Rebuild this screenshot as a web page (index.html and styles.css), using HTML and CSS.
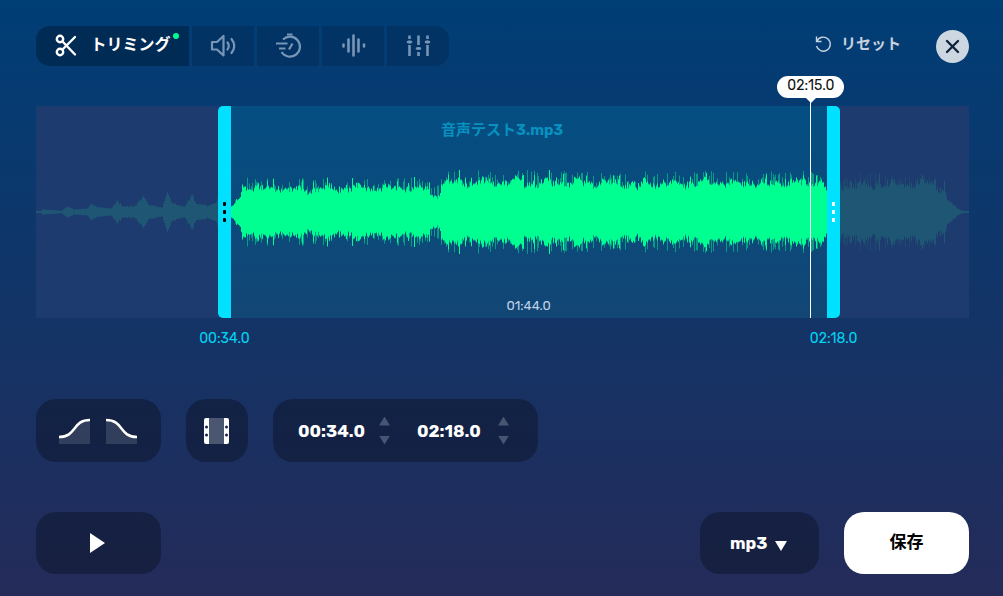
FILE: index.html
```html
<!DOCTYPE html>
<html lang="ja">
<head>
    <meta charset="UTF-8">
    <meta name="viewport" content="width=device-width, initial-scale=1.0">
    <title>音声カッター</title>
    <link rel="stylesheet" href="styles.css">
</head>
<body>

<main class="editor">
    <header class="topbar">
        <nav class="tabs">
            <button class="tab tab-active" type="button">
                <svg width="24" height="24" viewBox="0 0 24 24" fill="none" stroke="currentColor" stroke-width="2.4" stroke-linecap="round">
                    <circle cx="6" cy="5" r="3.200"/>
                    <circle cx="6" cy="18" r="3.200"/>
                    <path d="M8.500 7.500L21 20.500M8.500 15.500L21 3"/>
                </svg>
                <span class="tab-text">トリミング</span>
                <span class="tab-dot"></span>
            </button>
            <button class="tab" type="button" aria-label="音量">
                <svg width="28" height="26" viewBox="0 0 28 26" fill="none" stroke="currentColor" stroke-width="2.2" stroke-linejoin="round" stroke-linecap="round">
                    <path d="M3 9H8L14.500 3V22.500L8 16.500H3Z"/>
                    <path d="M18.500 9.500Q21 12.800 18.500 16.500M22.500 6Q28 12.800 22.500 20"/>
                </svg>
            </button>
            <button class="tab" type="button" aria-label="速度">
                <svg width="28" height="28" viewBox="0 0 28 28" fill="none" stroke="currentColor" stroke-width="2.2">
                    <path d="M9 7.500A10 10 0 1 1 7.500 20"/>
                    <path d="M13 2.500H18.500M2 11.500H13.500M5 16.500H11.500M15 17.500L18.500 11.500"/>
                </svg>
            </button>
            <button class="tab" type="button" aria-label="ピッチ">
                <svg width="26" height="26" viewBox="0 0 26 26" fill="none" stroke="currentColor" stroke-width="2.6" stroke-linecap="round">
                    <path d="M3.500 11.500V13.500M8.500 6.500V18.500M13.500 2.500V22.500M18.500 6.500V18.500M24 11.500V13.500"/>
                </svg>
            </button>
            <button class="tab" type="button" aria-label="イコライザー">
                <svg width="26" height="26" viewBox="0 0 26 26" fill="none" stroke="currentColor" stroke-width="2.6">
                    <path d="M4.500 2.500V6M4.500 12V23M13.500 2.500V12M13.500 19V23M22.500 2.500V6M22.500 12V23"/>
                    <path d="M3 9H6M12 15.500H15M21 9H24" stroke-linecap="round"/>
                    <path d="M4.500 7.500V10.500M13.500 14V17M22.500 7.500V10.500" stroke-width="2"/>
                </svg>
            </button>
        </nav>
        <button class="reset" type="button">
            <svg width="18" height="18" viewBox="0 0 18 18" fill="none" stroke="currentColor" stroke-width="1.4">
                <path d="M2.500 1.500V6.500H7.500M3 6A7 7 0 1 1 2.500 11"/>
            </svg>
            リセット
        </button>
        <button class="close" type="button" aria-label="閉じる">
            <svg width="15" height="15" viewBox="0 0 15 15" fill="none" stroke="currentColor" stroke-width="2.4" stroke-linecap="round">
                <path d="M2 2L13 13M13 2L2 13"/>
            </svg>
        </button>
    </header>

    <section class="timeline">
        <div class="selection"></div>
        <svg class="wave" viewBox="0 0 933 212" preserveAspectRatio="none">
            <path class="wave-soft" id="wave-soft"/>
            <path class="wave-dim" id="wave-dim"/>
            <path class="wave-peaks" id="wave-peaks"/>
            <path class="wave-on" id="wave-on"/>
        </svg>
        <div class="track-info">
            <span class="track-name">音声テスト3.mp3</span>
            <span class="track-length">01:44.0</span>
        </div>
        <div class="handle handle-start"><i></i><i></i><i></i><span class="handle-time">00:34.0</span></div>
        <div class="playhead"><span class="playhead-time">02:15.0</span></div>
        <div class="handle handle-end"><i></i><i></i><i></i><span class="handle-time">02:18.0</span></div>
    </section>

    <section class="tools">
        <div class="panel fades">
            <button class="icon-button" type="button" aria-label="フェードイン">
                <svg width="31" height="26" viewBox="0 0 31 26" fill="none">
                    <path d="M0 19C18 19 13 2 31 2V26H0Z" fill="#fff" fill-opacity=".13"/>
                    <path d="M0 19C18 19 13 2 31 2" stroke="#fff" stroke-width="2.500"/>
                </svg>
            </button>
            <button class="icon-button" type="button" aria-label="フェードアウト">
                <svg width="31" height="26" viewBox="0 0 31 26" fill="none">
                    <path d="M0 2C18 2 13 19 31 19V26H0Z" fill="#fff" fill-opacity=".13"/>
                    <path d="M0 2C18 2 13 19 31 19" stroke="#fff" stroke-width="2.500"/>
                </svg>
            </button>
        </div>
        <button class="panel clip" type="button" aria-label="選択範囲">
            <svg width="26" height="26" viewBox="0 0 26 26">
                <path d="M5 0H20V26H5Z" fill="#fff" fill-opacity=".24"/>
                <path d="M5 0H2Q0 0 0 2V24Q0 26 2 26H5ZM20 0H23Q25 0 25 2V24Q25 26 23 26H20Z" fill="#fff"/>
                <g fill="#132347">
                    <circle cx="2.500" cy="9" r="1.500"/>
                    <circle cx="2.500" cy="17" r="1.500"/>
                    <circle cx="22.500" cy="9" r="1.500"/>
                    <circle cx="22.500" cy="17" r="1.500"/>
                </g>
            </svg>
        </button>
        <div class="panel times">
            <div class="time-field">
                <input class="time-input" type="text" value="00:34.0" aria-label="開始時間">
                <div class="stepper">
                    <button class="step step-up" type="button" aria-label="開始を進める"></button>
                    <button class="step step-down" type="button" aria-label="開始を戻す"></button>
                </div>
            </div>
            <div class="time-field">
                <input class="time-input" type="text" value="02:18.0" aria-label="終了時間">
                <div class="stepper">
                    <button class="step step-up" type="button" aria-label="終了を進める"></button>
                    <button class="step step-down" type="button" aria-label="終了を戻す"></button>
                </div>
            </div>
        </div>
    </section>

    <footer class="bottombar">
        <button class="panel play" type="button" aria-label="再生">
            <svg width="16" height="20" viewBox="0 0 16 20"><path d="M0 0L15 10L0 20Z" fill="#fff"/></svg>
        </button>
        <div class="panel format">
            <select class="format-select" aria-label="形式">
                <option>mp3</option>
                <option>m4a</option>
                <option>wav</option>
            </select>
            <svg class="format-arrow" width="12" height="10" viewBox="0 0 12 10"><path d="M0 0H12L6 10Z" fill="#fff"/></svg>
        </div>
        <button class="panel save" type="button">保存</button>
    </footer>
</main>

<script src="script.js"></script>
</body>
</html>
```
FILE: styles.css
```css
* {
    margin: 0;
    padding: 0;
    box-sizing: border-box;
}

body {
    min-height: 100vh;
    font-family: Rubik, Inter, 'Noto Sans CJK JP', sans-serif;
    background: linear-gradient(#003e76, #242b59);
    color: #fff;
}

button, input, select {
    font: inherit;
    color: inherit;
    border: none;
    background: none;
}

button {
    display: flex;
    align-items: center;
    justify-content: center;
    cursor: pointer;
}

.editor {
    padding: 26px 34px 22px 36px;
}

.topbar {
    display: flex;
    align-items: center;
    height: 40px;
    margin-bottom: 40px;
}

.tabs {
    display: flex;
    gap: 3px;
    height: 40px;
    margin-right: auto;
    border-radius: 14px;
    overflow: hidden;
}

.tab {
    width: 62px;
    background: rgba(0, 15, 40, 0.2);
    color: #7795b5;
}

.tab-active {
    position: relative;
    width: 153px;
    gap: 12px;
    background: #002b55;
    color: #fff;
}

.tab-text {
    padding-bottom: 2px;
    font-size: 16px;
    font-weight: 700;
    line-height: 24px;
}

.tab-dot {
    position: absolute;
    top: 7px;
    right: 10px;
    width: 6px;
    height: 6px;
    border-radius: 50%;
    background: #00ff91;
}

.reset {
    gap: 9px;
    padding-bottom: 4px;
    margin-right: 35px;
    font-size: 15px;
    font-weight: 700;
    line-height: 24px;
    color: #c5d2df;
}

.close {
    width: 33px;
    height: 33px;
    border-radius: 50%;
    background: #ccd7e2;
    color: #12233c;
}

.timeline {
    position: relative;
    height: 212px;
    margin-bottom: 81px;
    background: #1e3b70;
}

.selection {
    position: absolute;
    top: 0;
    bottom: 0;
    left: 20.8%;
    right: 15.2%;
    background: linear-gradient(#044e82, #124675);
}

.wave {
    position: absolute;
    width: 100%;
    height: 100%;
}

.wave path {
    fill: none;
    stroke-width: 1;
}

.wave .wave-soft {
    stroke: #1e496f;
}

.wave .wave-dim {
    stroke: #1e5673;
}

.wave .wave-peaks {
    stroke: #059e85;
}

.wave .wave-on {
    stroke: #00ff91;
}

.track-info {
    position: absolute;
    top: 0;
    bottom: 0;
    left: 20.8%;
    right: 15.2%;
    display: flex;
    flex-direction: column;
    align-items: center;
    justify-content: space-between;
    padding: 14px 0 2px;
    line-height: 20px;
}

.track-name {
    padding-right: 53px;
    font-size: 15px;
    font-weight: 700;
    color: #0891bf;
}

.track-length {
    font-size: 13px;
    color: #bed1e7;
}

.handle {
    position: absolute;
    top: 0;
    bottom: 0;
    width: 13px;
    display: flex;
    flex-direction: column;
    align-items: center;
    justify-content: center;
    gap: 4px;
    background: #00e1ff;
}

.handle i {
    width: 3px;
    height: 4px;
    border-radius: 1px;
    background: #000;
}

.handle-start {
    left: 19.5%;
    border-radius: 5px 0 0 5px;
}

.handle-end {
    left: 84.8%;
    border-radius: 0 5px 5px 0;
}

.handle-end i {
    background: #fff;
}

.handle-time {
    position: absolute;
    top: 100%;
    padding-top: 11px;
    font-size: 14px;
    line-height: 20px;
    color: #00d5f3;
}

.playhead {
    position: absolute;
    top: -8px;
    bottom: 0;
    left: 83%;
    width: 1px;
    display: flex;
    justify-content: center;
    background: #fff;
}

.playhead-time {
    position: absolute;
    bottom: 100%;
    padding: 0 10px 2px;
    border-radius: 11px;
    font-size: 14px;
    line-height: 20px;
    background: #fff;
    color: #111;
}

.playhead-time::after {
    content: "";
    position: absolute;
    top: 100%;
    left: 50%;
    margin-left: -5px;
    border: 5px solid transparent;
    border-top-color: #fff;
}

.tools, .bottombar {
    display: flex;
    gap: 25px;
}

.tools {
    margin-bottom: 50px;
}

.panel {
    display: flex;
    align-items: center;
    justify-content: center;
    height: 62px;
    border-radius: 20px;
    background: rgba(11, 20, 40, 0.5);
}

.tools .panel {
    height: 63px;
}

.fades {
    width: 125px;
    gap: 16px;
    padding-right: 2px;
}

.clip {
    width: 62px;
}

.times {
    gap: 27px;
    padding: 0 29px 0 25px;
}

.time-field {
    display: flex;
    align-items: center;
    gap: 12px;
}

.time-input {
    width: 69px;
    font-size: 17px;
    font-weight: 700;
}

.stepper {
    display: flex;
    flex-direction: column;
    gap: 10px;
}

.step {
    width: 11px;
    height: 9px;
    background: #465571;
}

.step-up {
    clip-path: polygon(50% 0, 100% 100%, 0 100%);
}

.step-down {
    clip-path: polygon(0 0, 100% 0, 50% 100%);
}

.play {
    width: 125px;
    padding-right: 2px;
    margin-right: auto;
}

.format {
    position: relative;
    width: 119px;
}

.format-select {
    width: 100%;
    height: 100%;
    padding-left: 30px;
    font-size: 17px;
    font-weight: 700;
    appearance: none;
    cursor: pointer;
}

.format-select option {
    color: #111;
}

.format-arrow {
    position: absolute;
    top: 29px;
    right: 32px;
    pointer-events: none;
}

.save {
    width: 125px;
    padding-bottom: 5px;
    font-size: 17px;
    font-weight: 700;
    background: #fff;
    color: #000;
}
```
FILE: script.js
```js
// [x, core height, peak height], half amplitudes around the middle line
const levels = [
    [0, 1, 1], [5, 1, 1], [6, 2, 3], [25, 1, 2], [31, 5, 6], [38, 2, 3], [51, 3, 4], [55, 8, 11],
    [60, 4, 6], [75, 3, 4], [81, 9, 14], [86, 5, 7], [98, 4, 7], [105, 10, 14], [107, 14, 19], [113, 6, 9],
    [126, 4, 7], [131, 18, 22], [135, 8, 11], [148, 4, 7], [155, 14, 22], [160, 7, 9], [172, 5, 8],
    [180, 8, 12], [182, 15, 22], [184, 6, 9], [195, 4, 8], [204, 13, 17], [206, 22, 35], [210, 19, 35],
    [260, 17, 34], [330, 19, 35], [390, 18, 35], [396, 12, 24], [404, 14, 28], [406, 24, 42],
    [520, 23, 42], [595, 23, 41], [601, 20, 26], [606, 23, 42], [700, 22, 41], [786, 23, 42], [791, 19, 21],
    [815, 21, 39], [850, 21, 40], [880, 23, 40], [895, 23, 40], [902, 18, 32], [908, 20, 38],
    [911, 9, 17], [917, 4, 9], [925, 1, 3], [927, 1, 1], [933, 1, 1]
];
const selectionStart = 194;
const selectionEnd = 791;
const middle = 106;

let seed = 7;
function random() {
    seed = (seed * 16807) % 2147483647;
    return seed / 2147483647;
}

function levelAt(x) {
    const i = Math.max(1, levels.findIndex(point => point[0] >= x));
    const a = levels[i - 1];
    const b = levels[i];
    const t = (x - a[0]) / (b[0] - a[0]);
    return [a[1] + (b[1] - a[1]) * t, a[2] + (b[2] - a[2]) * t];
}

let soft = '', dim = '', peaks = '', on = '';
for (let x = 0; x < 933; x++) {
    const [core, peak] = levelAt(x);
    const range = peak - core;
    // slow swell of the body, with a few single columns that reach the peak
    const swell = 0.3 + 0.12 * Math.sin(x / 5) + 0.08 * Math.sin(x / 2.3);
    const spike = random() < 0.14 ? random() * 0.6 : 0;
    const inner = core + range * Math.min(1, swell + spike + (random() - 0.5) * 0.35);
    const outer = inner + (peak - inner) * (random() < 0.35 ? random() : 0.08);
    const bar = h => `M${x + 0.5} ${(middle - h).toFixed(1)}V${(middle + h).toFixed(1)}`;
    if (x >= selectionStart && x < selectionEnd) {
        peaks += bar(outer);
        on += bar(inner);
    } else {
        soft += bar(outer);
        dim += bar(inner);
    }
}
document.getElementById('wave-soft').setAttribute('d', soft);
document.getElementById('wave-dim').setAttribute('d', dim);
document.getElementById('wave-peaks').setAttribute('d', peaks);
document.getElementById('wave-on').setAttribute('d', on);
```
